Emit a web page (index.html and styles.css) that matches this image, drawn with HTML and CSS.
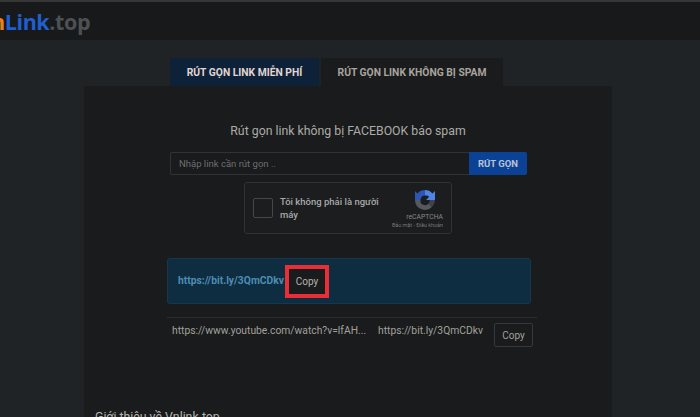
FILE: index.html
```html
<!DOCTYPE html>
<html lang="vi">
<head>
<meta charset="utf-8">
<title>VnLink.top</title>
<link rel="stylesheet" href="styles.css">
</head>
<body>
<div class="topline"></div>
<header class="header">
  <a class="logo"><span class="logo-n">n</span><span class="logo-link">Link</span><span class="logo-top">.top</span></a>
</header>
<main class="main">
  <nav class="tabs">
    <a class="tab tab-active">RÚT GỌN LINK MIỄN PHÍ</a>
    <a class="tab tab-other">RÚT GỌN LINK KHÔNG BỊ SPAM</a>
  </nav>
  <section class="card">
    <h1 class="title">Rút gọn link không bị FACEBOOK báo spam</h1>
    <div class="form-row">
      <div class="input">Nhập link cần rút gọn ..</div>
      <button class="submit">RÚT GỌN</button>
    </div>
    <div class="captcha">
      <span class="check"></span>
      <span class="captcha-text">Tôi không phải là người máy</span>
      <div class="captcha-brand">
        <svg class="captcha-icon" viewBox="0 0 24 24" width="24" height="24">
          <path d="M2 12a10 10 0 0 0 17 7l-3.500-3.500A4.500 4.500 0 0 1 7.500 12z" fill="#55585c"/>
          <path d="M22 12a10 10 0 0 1-3 7l-3.500-3.500A4.500 4.500 0 0 0 16.500 12z" fill="#404347"/>
          <path d="M7.500 12H2V3l2.400 2.400A10 10 0 0 1 12 2v5.500A4.500 4.500 0 0 0 7.500 12z" fill="#2c55b4"/>
          <path d="M12 2a10 10 0 0 1 7.500 3.400L22 3v9h-9l3.200-3.200A4.500 4.500 0 0 0 12 7.500z" fill="#4f83e6"/>
        </svg>
        <span class="brand-name">reCAPTCHA</span>
        <span class="brand-links">Bảo mật - Điều khoản</span>
      </div>
    </div>
    <div class="alert">
      <a class="alert-link">https://bit.ly/3QmCDkv</a>
      <button class="copy-marked">Copy</button>
    </div>
    <div class="result">
      <span class="result-long">https://www.youtube.com/watch?v=lfAH...</span>
      <span class="result-short">https://bit.ly/3QmCDkv</span>
      <button class="copy">Copy</button>
    </div>
    <h2 class="intro">Giới thiệu về Vnlink.top</h2>
  </section>
</main>
</body>
</html>
```
FILE: styles.css
```css
* { box-sizing: border-box; }
html, body { margin: 0; height: 417px; overflow: hidden; }
body { background: #1f2326; font-family: Roboto, "Liberation Sans", sans-serif; color: #b5b3ad; }
.topline { height: 2px; background: #343638; }
.header { height: 38px; background: #17191b; display: flex; align-items: center; overflow: hidden; }
.logo { display: block; margin-left: -9px; margin-top: 1px; font: 700 21.500px/24px "Open Sans", sans-serif; letter-spacing: -0.4px; white-space: nowrap; }
.logo-n { color: #e8821e; }
.logo-link { color: #1f5fd0; }
.logo-top { color: #4d5154; }
.main { display: flex; flex-direction: column; align-items: flex-start; padding: 18px 0 0 84px; }
.tabs { display: flex; gap: 2px; height: 28px; margin-left: 86px; }
.tab { display: flex; align-items: center; justify-content: center; font-size: 10.300px; font-weight: 700; height: 28px; white-space: nowrap; }
.tab-active { width: 149px; background: #0d2238; color: #e2d6d2; }
.tab-other { width: 182px; background: #191b1d; color: #a8a49c; }
.card { width: 528px; height: 340px; background: #191b1d; display: flex; flex-direction: column; align-items: center; }
.title { margin: 37px 0 0; font-size: 12.300px; font-weight: 400; line-height: 16px; color: #aeaca6; }
.form-row { display: flex; width: 357px; height: 23px; margin-top: 13px; margin-left: 1px; }
.input { flex: 1; border: 1px solid #303336; border-right: 0; background: #191b1d; padding-left: 8px; font-size: 9.500px; line-height: 21px; color: #6d6f70; border-radius: 2px 0 0 2px; }
.submit { width: 58px; border: 0; background: #0b4296; color: #b9c4d6; font: 700 9.500px Roboto, sans-serif; border-radius: 0 2px 2px 0; padding: 0; }
.captcha { display: flex; align-items: center; width: 208px; height: 52px; margin-top: 7px; border: 1px solid #303336; border-radius: 3px; background: #1b1d1f; padding: 0 8px; }
.check { width: 20px; height: 20px; flex: none; border: 1.500px solid #45484a; border-radius: 2px; }
.captcha-text { width: 102px; margin-left: 7px; font-size: 9.500px; line-height: 13px; font-weight: 500; color: #a9a9a7; }
.captcha-brand { display: flex; flex-direction: column; align-items: flex-end; margin-left: auto; margin-top: 1px; }
.captcha-icon { display: block; margin-right: 6px; }
.brand-name { font-size: 6.800px; line-height: 8px; color: #8a8a88; margin-top: 1px; }
.brand-links { font-size: 5.400px; line-height: 8px; color: #77787a; white-space: nowrap; }
.alert { display: flex; align-items: center; width: 364px; height: 46px; margin-top: 24px; margin-left: 2px; padding-left: 10px; background: #0f2d40; border: 1px solid #15384e; border-radius: 3px; }
.alert-link { font-size: 10.300px; font-weight: 700; color: #4d8cb3; white-space: nowrap; width: 107px; padding-bottom: 2px; }
.copy-marked { width: 44px; height: 33px; border: 4px solid #ea2e38; background: #1a1b1d; color: #b5b3ad; font: 400 10px Roboto, sans-serif; padding: 0; }
.result { display: flex; align-items: flex-start; width: 370px; height: 35px; margin-top: 13px; margin-left: 8px; padding-left: 5px; border-top: 1px solid #2a2d2f; }
.result-long, .result-short { font-size: 10.300px; line-height: 26px; color: #a3a19b; white-space: nowrap; }
.result-long { width: 206px; }
.result-short { width: 116px; }
.copy { width: 39px; height: 24px; margin-top: 5px; border: 1px solid #36393b; border-radius: 2px; background: #191b1d; color: #a3a19b; font: 400 10px Roboto, sans-serif; padding: 0; }
.intro { align-self: flex-start; margin: 57px 0 0 11px; font-size: 12.300px; font-weight: 400; line-height: 16px; color: #b5b3ad; }
```
